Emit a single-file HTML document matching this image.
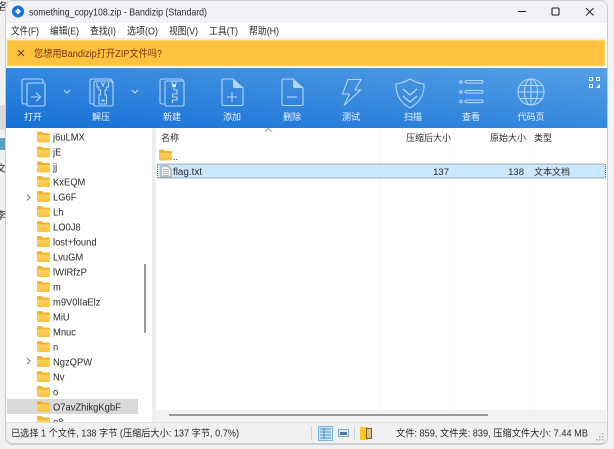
<!DOCTYPE html>
<html><head><meta charset="utf-8"><style>
html,body{margin:0;padding:0;background:#f1f1f1;overflow:hidden}
svg{display:block;font-family:"Liberation Sans","Noto Sans CJK SC",sans-serif;font-size:9px;fill:#2a2a2a;filter:blur(.3px)}
.w{fill:#eef5fd;font-size:9px;text-anchor:middle}
.i{fill:none;stroke:#b5d5f5;stroke-width:1.1}
.tree{font-size:10px}
</style></head><body>
<svg width="614" height="449" viewBox="0 0 614 449" xmlns="http://www.w3.org/2000/svg">
<defs>
<linearGradient id="tb" x1="0" y1="1" x2="1" y2="0"><stop offset="0" stop-color="#1570d6"/><stop offset="1" stop-color="#559fe6"/></linearGradient>
<linearGradient id="fd" x1="0" y1="0" x2="0" y2="1"><stop offset="0" stop-color="#ffd86b"/><stop offset="1" stop-color="#fcc23c"/></linearGradient>
<g id="f"><path d="M0 1.500Q0 0 1.500 0H4.500L6 1.500H11.500Q13 1.500 13 3V9.500Q13 11 11.500 11H1.500Q0 11 0 9.500Z" fill="url(#fd)"/><path d="M0 1.500Q0 0 1.500 0H4.500L6 1.500H11.500Q13 1.500 13 3V3.500H0Z" fill="#f5b32c"/></g>
</defs>
<rect width="614" height="449" fill="#f1f1f1"/>
<rect x="0" y="105" width="6" height="25" fill="#d9d9d9"/>
<rect x="0" y="138" width="6" height="12" fill="#5a9fc0"/>
<text x="-2" y="10" font-size="10">各</text>
<text x="-4" y="172" font-size="10">文</text>
<text x="-4" y="219" font-size="10">李</text>
<rect x="5" y="0" width="603" height="445" rx="8" fill="#cccccc"/>
<rect x="6" y="1" width="601" height="442" rx="7" fill="#fff"/>
<path d="M6 23V8Q6 1 13 1H600Q607 1 607 8V23Z" fill="#f2f1f7"/>
<circle cx="18" cy="11.500" r="6" fill="#1273d8"/>
<path d="M18 8.500L21 11.500L18 14.500L15 11.500Z" fill="#fff"/>
<text x="29" y="15.500" font-size="10.300" textLength="178" lengthAdjust="spacingAndGlyphs">something_copy108.zip - Bandizip (Standard)</text>
<path d="M518 11.500H526" stroke="#222" stroke-width="1"/>
<rect x="552" y="8" width="7" height="7" rx="1" fill="none" stroke="#222" stroke-width="1.100"/>
<path d="M586 8L593.500 15.500M593.500 8L586 15.500" stroke="#222" stroke-width="1"/>
<g font-size="10">
<text x="11" y="34.500" textLength="28" lengthAdjust="spacingAndGlyphs">文件(F)</text>
<text x="50" y="34.500" textLength="29" lengthAdjust="spacingAndGlyphs">编辑(E)</text>
<text x="90" y="34.500" textLength="26" lengthAdjust="spacingAndGlyphs">查找(I)</text>
<text x="127" y="34.500" textLength="31" lengthAdjust="spacingAndGlyphs">选项(O)</text>
<text x="169" y="34.500" textLength="29" lengthAdjust="spacingAndGlyphs">视图(V)</text>
<text x="209" y="34.500" textLength="29" lengthAdjust="spacingAndGlyphs">工具(T)</text>
<text x="249" y="34.500" textLength="30" lengthAdjust="spacingAndGlyphs">帮助(H)</text>
</g>
<rect x="6" y="38" width="601" height="1" fill="#ececec"/>
<rect x="7" y="40" width="598" height="26" fill="#ffc23c" stroke="#fbe3a6" stroke-width="1"/>
<path d="M18 50L24 56M24 50L18 56" stroke="#5a4020" stroke-width="1"/>
<text x="34" y="57" font-size="10" fill="#7a3410" textLength="128" lengthAdjust="spacingAndGlyphs">您想用Bandizip打开ZIP文件吗?</text>
<rect x="6" y="68" width="601" height="60" fill="url(#tb)"/>
<!-- open -->
<g class="i"><path d="M27 104H24Q22 104 22 102V81Q22 79 24 79H41Q43 79 43 81V83"/><rect x="27" y="83" width="18" height="23" rx="1.500"/><path d="M31 97H40M36 92.500L40.500 97L36 101.500"/></g>
<path d="M64 90L67 93L70 90" fill="none" stroke="#cfe3f8" stroke-width="1"/>
<text class="w" x="33" y="120">打开</text>
<!-- extract -->
<g class="i"><path d="M94 104H92Q90 104 90 102V81Q90 79 92 79H110Q112 79 112 81V83"/><rect x="94" y="81" width="19" height="25" rx="1.500"/><path d="M97 82V87H99V90H100.500V95H99V104H106.500V95H105V90H106.500V87H108.500V82M101 82L103 86L104.500 82"/><rect x="101.500" y="99.500" width="3" height="2" fill="#cfe3f8" stroke="none"/></g>
<path d="M132 90L135 93L138 90" fill="none" stroke="#cfe3f8" stroke-width="1"/>
<text class="w" x="101" y="120">解压</text>
<!-- new -->
<g class="i"><path d="M164 104H162Q160 104 160 102V81Q160 79 162 79H181Q183 79 183 81"/><rect x="165" y="81" width="19" height="25" rx="1.500"/><path d="M172 81V84M176 81V84M174 87V90H177V94H172.500V97H177V100H172.500V103"/></g>
<rect x="172" y="84" width="4" height="3" fill="#cfe3f8"/>
<text class="w" x="172" y="120">新建</text>
<!-- add -->
<g class="i"><path d="M233 79H223.500Q222 79 222 80.500V104Q222 105.500 223.500 105.500H241.500Q243 105.500 243 104V88Z"/><path d="M227 97H237M232 92V102"/></g>
<path d="M233 79L243 88H234.500Q233 88 233 86.500Z" fill="#b5d5f5"/>
<text class="w" x="232" y="120">添加</text>
<!-- delete -->
<g class="i"><path d="M293 79H283.500Q282 79 282 80.500V104Q282 105.500 283.500 105.500H301.500Q303 105.500 303 104V88Z"/><path d="M287 97H297"/></g>
<path d="M293 79L303 88H294.500Q293 88 293 86.500Z" fill="#b5d5f5"/>
<text class="w" x="292" y="120">删除</text>
<!-- test -->
<g class="i"><path d="M348 79.500H361L355 90H360.500L344 105.500L349.500 94H342.500Z"/></g>
<text class="w" x="351" y="120">测试</text>
<!-- scan -->
<g class="i"><path d="M410 79Q402 83.500 396 84Q395.500 100 410 108Q424.500 100 424 84Q418 83.500 410 79Z"/><path d="M403 89L410 95L417 89M403 96L410 102L417 96" stroke-width="1.400"/></g>
<text class="w" x="413" y="120">扫描</text>
<!-- view -->
<g class="i"><circle cx="461" cy="82" r="1.300"/><circle cx="461" cy="92" r="1.300"/><circle cx="461" cy="101.500" r="1.300"/><rect x="465" y="80.500" width="18" height="2.600" rx="1.300"/><rect x="465" y="90.500" width="18" height="2.600" rx="1.300"/><rect x="465" y="100" width="18" height="2.600" rx="1.300"/></g>
<text class="w" x="471" y="120">查看</text>
<!-- codepage -->
<g class="i"><circle cx="531" cy="92" r="13"/><ellipse cx="531" cy="92" rx="6.500" ry="13"/><path d="M531 79V105M518 92H544M520 85.500H542M520 98.500H542"/></g>
<text class="w" x="531" y="120">代码页</text>
<!-- small grid -->
<g fill="none" stroke="#fff" stroke-width="1"><rect x="589.500" y="77.500" width="3" height="3"/><rect x="596.500" y="77.500" width="3" height="3"/><rect x="589.500" y="84.500" width="3" height="3"/></g>
<path d="M596 88L600 84V88Z" fill="#fff"/>
<!-- tree -->
<rect x="7" y="399" width="131" height="15" fill="#d9d9d9"/>
<path d="M27 194.500L30 197.500L27 200.500M27 358L30 361L27 364" fill="none" stroke="#777" stroke-width="1"/>
<use href="#f" x="37" y="131.500"/><use href="#f" x="37" y="146.500"/><use href="#f" x="37" y="161.500"/><use href="#f" x="37" y="176"/><use href="#f" x="37" y="191"/><use href="#f" x="37" y="206"/><use href="#f" x="37" y="221"/><use href="#f" x="37" y="236"/><use href="#f" x="37" y="251"/><use href="#f" x="37" y="266"/><use href="#f" x="37" y="281"/><use href="#f" x="37" y="296"/><use href="#f" x="37" y="311"/><use href="#f" x="37" y="326"/><use href="#f" x="37" y="341"/><use href="#f" x="37" y="356"/><use href="#f" x="37" y="371"/><use href="#f" x="37" y="386"/><use href="#f" x="37" y="401"/><use href="#f" x="37" y="416"/>
<g class="tree" transform="translate(53 0) scale(.94 1)">
<text y="140.500">j6uLMX</text>
<text y="155.500">jE</text>
<text y="170.500">jj</text>
<text y="185.500">KxEQM</text>
<text y="200.500">LG6F</text>
<text y="215.500">Lh</text>
<text y="230.500">LO0J8</text>
<text y="245.500">lost+found</text>
<text y="260.500">LvuGM</text>
<text y="275.500">lWIRfzP</text>
<text y="290.500">m</text>
<text y="305.500">m9V0lIaElz</text>
<text y="320.500">MiU</text>
<text y="335.500">Mnuc</text>
<text y="350.500">n</text>
<text y="365.500">NgzQPW</text>
<text y="380.500">Nv</text>
<text y="395.500">o</text>
<text y="410.500">O7avZhikgKgbF</text>
<text y="425.500">o8</text>
</g>
<rect x="144" y="264" width="2" height="69" fill="#999"/>
<rect x="152" y="128" width="4" height="295" fill="#eeeeee"/>
<!-- list -->
<g fill="#f2f7fd"><rect x="380" y="128" width="1" height="282"/><rect x="454" y="128" width="1" height="282"/><rect x="529" y="128" width="1" height="282"/></g>
<text x="161" y="141">名称</text>
<path d="M265 131.500L268.500 128.500L272 131.500" fill="none" stroke="#999" stroke-width="1"/>
<text x="451" y="141" text-anchor="end">压缩后大小</text>
<text x="526" y="141" text-anchor="end">原始大小</text>
<text x="534" y="141">类型</text>
<use href="#f" x="159" y="149.500"/>
<text x="173" y="160">..</text>
<rect x="157.500" y="164" width="448" height="14" fill="#cce8ff" stroke="#5c6a76" stroke-width="1" stroke-dasharray="1 1"/>
<path d="M161 166H168L171 169V177H161Z" fill="#eee" stroke="#9a9a9a" stroke-width="1"/>
<path d="M163 169.500H169M163 171.500H169M163 173.500H169M163 175.500H169" stroke="#aaa" stroke-width="0.800"/>
<text x="173" y="175" font-size="10" textLength="29" lengthAdjust="spacingAndGlyphs">flag.txt</text>
<text x="449" y="175" font-size="9.500" text-anchor="end">137</text>
<text x="524" y="175" font-size="9.500" text-anchor="end">138</text>
<text x="534" y="175">文本文档</text>
<!-- h scrollbar -->
<rect x="156" y="410" width="450" height="13" fill="#f2f2f2"/>
<rect x="169" y="414" width="319" height="2" fill="#999"/>
<!-- status -->
<path d="M6 423H607V436Q607 443 600 443H13Q6 443 6 436Z" fill="#f0f0f0"/>
<rect x="6" y="422" width="601" height="1" fill="#e3e3e3"/>
<text x="11" y="436.500" font-size="9.800" textLength="228" lengthAdjust="spacingAndGlyphs">已选择 1 个文件, 138 字节 (压缩后大小: 137 字节, 0.7%)</text>
<rect x="311" y="426" width="1" height="14" fill="#d5d5d5"/>
<rect x="354" y="426" width="1" height="14" fill="#d5d5d5"/>
<rect x="318.500" y="426.500" width="14" height="14" fill="#cce8ff" stroke="#7ab8e8"/>
<path d="M320 429H331M320 432H331M320 435H331M320 438H331M324 428V439" stroke="#4a90c0" stroke-width="1"/>
<rect x="338.500" y="429.500" width="10" height="7" fill="#dfe8ee" stroke="#8aa"/>
<rect x="340" y="432" width="7" height="3" fill="#4a7a9a"/>
<rect x="360" y="427" width="8" height="13" fill="#ffc81e"/>
<rect x="366.500" y="428.500" width="5" height="10" fill="#d9c48a" stroke="#776030" stroke-width="1"/>
<text x="396" y="436.500" font-size="9.800" textLength="192" lengthAdjust="spacingAndGlyphs">文件: 859, 文件夹: 839, 压缩文件大小: 7.44 MB</text>
<g fill="#aaa"><rect x="602" y="433" width="1.500" height="1.500"/><rect x="599" y="436" width="1.500" height="1.500"/><rect x="602" y="436" width="1.500" height="1.500"/><rect x="596" y="439" width="1.500" height="1.500"/><rect x="599" y="439" width="1.500" height="1.500"/><rect x="602" y="439" width="1.500" height="1.500"/></g>
</svg>
</body></html>
